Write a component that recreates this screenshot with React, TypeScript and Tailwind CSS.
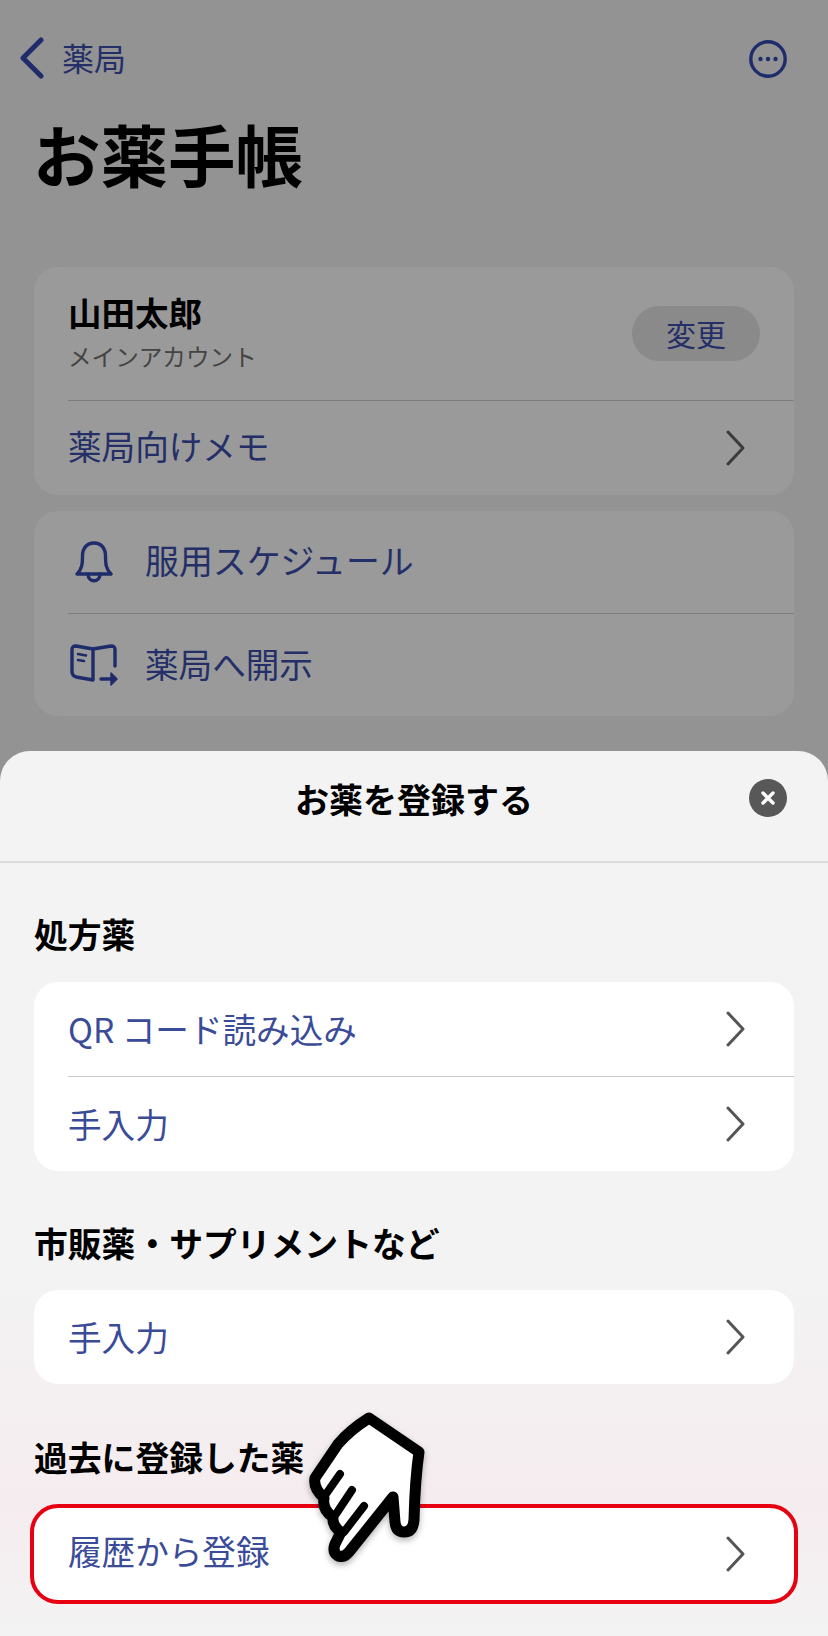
import React from 'react';

const FONT = "font-['Noto_Sans_CJK_JP','Noto_Sans',sans-serif]";

function Chevron({ color }: { color: string }) {
  return (
    <svg width="22" height="36" viewBox="0 0 22 36" fill="none" className="shrink-0">
      <path d="M3 2 L18 18 L3 34" stroke={color} strokeWidth="3" strokeLinecap="round" strokeLinejoin="round" />
    </svg>
  );
}

function DimRow({ label, height }: { label: string; height: string }) {
  return (
    <div className={`flex items-center justify-between pl-[34px] pr-[47px] text-[33.6px] text-[#242f68] ${height}`}>
      <span className="-translate-y-[2px]">{label}</span>
      <Chevron color="#3b3b3b" />
    </div>
  );
}

function SheetRow({ label, className, textClass }: { label: string; className: string; textClass?: string }) {
  return (
    <div className={`flex items-center justify-between pl-[34px] pr-[47px] text-[33.6px] text-[#3a4b98] ${className}`}>
      <span className={textClass}>{label}</span>
      <Chevron color="#555555" />
    </div>
  );
}

function SectionLabel({ children, className }: { children: React.ReactNode; className: string }) {
  return <div className={`h-10 flex items-center text-[33.8px] font-bold text-black ${className}`}>{children}</div>;
}

function BellIcon() {
  return (
    <svg width="38" height="42" viewBox="0 0 38 42" fill="none" stroke="#1f2c6b" strokeWidth="3.4" strokeLinejoin="round" strokeLinecap="round">
      <path d="M2 33 C7 28 7.5 23 7.5 15 C7.5 7 12 2 19 2 C26 2 30.5 7 30.5 15 C30.5 23 31 28 36 33 Z" />
      <path d="M13 33 C13 42 25 42 25 33" />
    </svg>
  );
}

function BookIcon() {
  return (
    <svg width="48" height="42" viewBox="0 0 48 42" fill="none" stroke="#1f2c6b" strokeWidth="3.4" strokeLinejoin="round" strokeLinecap="round">
      <path d="M23 5 L6 2 C3 2 2 3 2 6 L2 28 C2 31 3 32 6 33 L23 36 Z" />
      <path d="M23 5 L41 2 C44 2 45 3 45 6 L45 22" />
      <path d="M8 10 L16 11.5 M8 16 L14 17" strokeWidth="2.6" />
      <path d="M31 35 L44 35" />
      <path d="M41 29 L47 35 L41 41 Z" fill="#1f2c6b" strokeWidth="1.5" />
    </svg>
  );
}

function HandPointer() {
  return (
    <svg width="124" height="160" viewBox="55 28 124 160" fill="none" className="absolute left-[305px] top-[1408px] drop-shadow-[0_3px_3px_rgba(0,0,0,0.3)]">
      <path
        d="M119 38 L169 72 Q165 100 164 140 Q163 152 154 152 Q146 152 145 142 L143 117 L99 172 Q94 178 88 176 Q82 172 85 164 L91 152 Q82 146 83 137 Q72 130 74 118 Q63 108 65 98 L88 64 Q100 50 119 38 Z"
        fill="#ffffff"
        stroke="#000000"
        strokeWidth="11"
        strokeLinejoin="round"
      />
      <path d="M90 94 L76 114 M102 110 L86 134 M114 126 L94 152" stroke="#000000" strokeWidth="8" strokeLinecap="round" />
    </svg>
  );
}

export default function App() {
  return (
    <div className={`relative w-[828px] h-[1636px] overflow-hidden bg-[#939393] ${FONT}`}>
      <div className="h-[751px] pt-[38px]">
        <div className="flex items-center justify-between h-10 pl-5 pr-[41px]">
          <div className="flex items-center gap-[18px] text-[32px] text-[#242f68]">
            <svg width="24" height="42" viewBox="0 0 24 42" fill="none">
              <path d="M21 3 L3 21 L21 39" stroke="#1f2c6b" strokeWidth="5" strokeLinecap="round" strokeLinejoin="round" />
            </svg>
            <span className="-translate-y-[1px]">薬局</span>
          </div>
          <svg width="38" height="38" viewBox="0 0 38 38" fill="none" className="translate-y-[1px]">
            <circle cx="19" cy="19" r="17.2" stroke="#1f2c6b" strokeWidth="3.4" />
            <circle cx="11.5" cy="19" r="2.2" fill="#1f2c6b" />
            <circle cx="19" cy="19" r="2.2" fill="#1f2c6b" />
            <circle cx="26.5" cy="19" r="2.2" fill="#1f2c6b" />
          </svg>
        </div>
        <h1 className="pl-[33px] mt-[39px] h-[72px] leading-[72px] text-[67.5px] font-bold text-black">お薬手帳</h1>

        <div className="mx-[34px] mt-[78px] rounded-[24px] bg-[#9a9a9a] overflow-hidden">
          <div className="h-[133px] flex items-center justify-between pl-[34px] pr-[34px]">
            <div className="flex flex-col -translate-y-[1px]">
              <span className="text-[33.5px] leading-[44px] font-bold text-black -translate-y-[3px]">山田太郎</span>
              <span className="text-[23.6px] leading-[36px] text-[#444444] translate-y-[1px]">メインアカウント</span>
            </div>
            <div className="w-[128px] h-[55px] rounded-full bg-[#8a8a8a] flex items-center justify-center text-[30px] text-[#242f68]">
              変更
            </div>
          </div>
          <div className="ml-[34px] h-px bg-[#7d7d7d]" />
          <DimRow label="薬局向けメモ" height="h-[94px]" />
        </div>

        <div className="mx-[34px] mt-4 rounded-[24px] bg-[#9a9a9a] overflow-hidden">
          <div className="h-[102px] flex items-center gap-[32px] pl-[41px] text-[33.9px] text-[#242f68]">
            <BellIcon />
            <span className="-translate-y-[2px]">服用スケジュール</span>
          </div>
          <div className="ml-[34px] h-px bg-[#7d7d7d]" />
          <div className="h-[102px] flex items-center gap-[27px] pl-[36px] text-[33.6px] text-[#242f68]">
            <BookIcon />
            <span className="-translate-y-[1px]">薬局へ開示</span>
          </div>
        </div>
      </div>

      <div className="h-[885px] rounded-t-[30px] bg-linear-to-b from-[#f3f3f3] from-60% via-[#f5ecef] via-85% to-[#f3f3f3] to-100%">
        <div className="relative h-[112px] pb-4 flex items-center justify-center border-b-2 border-[#dcdcdc]">
          <span className="text-[34px] font-bold text-black">お薬を登録する</span>
          <div className="absolute right-[41px] top-[28px] w-[38px] h-[38px] rounded-full bg-[#585858] flex items-center justify-center">
            <svg width="16" height="16" viewBox="0 0 16 16" fill="none">
              <path d="M3 3 L13 13 M13 3 L3 13" stroke="#ffffff" strokeWidth="3.4" strokeLinecap="round" />
            </svg>
          </div>
        </div>

        <div className="px-[34px]">
          <SectionLabel className="mt-[51px] mb-[28px]">処方薬</SectionLabel>
          <div className="rounded-[24px] bg-white overflow-hidden">
            <SheetRow label="QR コード読み込み" className="h-[94px]" />
            <div className="ml-[34px] h-px bg-[#c9c9c9]" />
            <SheetRow label="手入力" className="h-[94px]" />
          </div>

          <SectionLabel className="mt-[52px] mb-[27px]">市販薬・サプリメントなど</SectionLabel>
          <SheetRow label="手入力" className="h-[94px] rounded-[24px] bg-white" />

          <SectionLabel className="mt-[53px] mb-[31px]">過去に登録した薬</SectionLabel>
          <SheetRow label="履歴から登録" className="h-[92px] rounded-[24px] bg-white outline-4 outline-[#e60012]" textClass="-translate-y-[3px]" />
        </div>
      </div>

      <HandPointer />
    </div>
  );
}
